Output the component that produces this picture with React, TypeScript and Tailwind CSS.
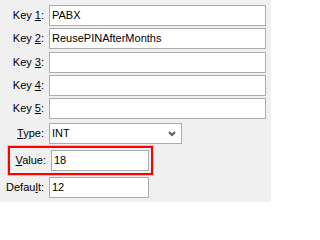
import React from "react";

const font = { fontFamily: '"Liberation Sans", Arial, sans-serif' };

function Label({ pre, u, post, w = "w-[44px]" }: { pre: string; u: string; post: string; w?: string }) {
  return (
    <span className={`${w} shrink-0 text-right whitespace-pre`}>
      {pre}
      <span className="underline underline-offset-[1px]">{u}</span>
      {post}
    </span>
  );
}

function Field({ value = "", width = "w-[217px]" }: { value?: string; width?: string }) {
  return (
    <div className={`${width} h-[21px] border border-[#acacac] bg-white pl-[2px] flex items-center`}>
      {value}
    </div>
  );
}

export default function App() {
  const keys = [
    { n: "1", v: "PABX", mt: "mt-[5px]" },
    { n: "2", v: "ReusePINAfterMonths", mt: "mt-[2px]" },
    { n: "3", v: "", mt: "mt-[3px]" },
    { n: "4", v: "", mt: "mt-[2px]" },
    { n: "5", v: "", mt: "mt-[2px]" },
  ];
  return (
    <div className="w-[271px] h-[202px] bg-[#f0f0f0] text-[11px] text-black overflow-hidden" style={font}>
      {keys.map((k) => (
        <div key={k.n} className={`flex items-center gap-[5px] ${k.mt}`}>
          <Label pre="Key " u={k.n} post=":" />
          <Field value={k.v} />
        </div>
      ))}
      <div className="flex items-center gap-[5px] mt-[4px]">
        <Label pre="" u="T" post="ype:" />
        <div className="w-[133px] h-[21px] border border-[#acacac] bg-white pl-[2px] pr-[5px] flex items-center justify-between">
          <span>INT</span>
          <svg width="8" height="6" viewBox="0 0 8 6">
            <polyline points="1,1 4,4 7,1" fill="none" stroke="#606060" strokeWidth="2" />
          </svg>
        </div>
      </div>
      <div className="ml-[8px] mt-[2px] w-[145px] border-2 border-[#ff0000] shadow-[0_0_0_1px_#ffb3b3] p-[2px] flex items-center gap-[5px]">
        <Label pre="" u="V" post="alue:" w="w-[34px]" />
        <Field value="18" width="w-[100px]" />
      </div>
      <div className="flex items-center gap-[5px] mt-[2px]">
        <Label pre="Defau" u="l" post="t:" />
        <Field value="12" width="w-[100px]" />
      </div>
    </div>
  );
}
